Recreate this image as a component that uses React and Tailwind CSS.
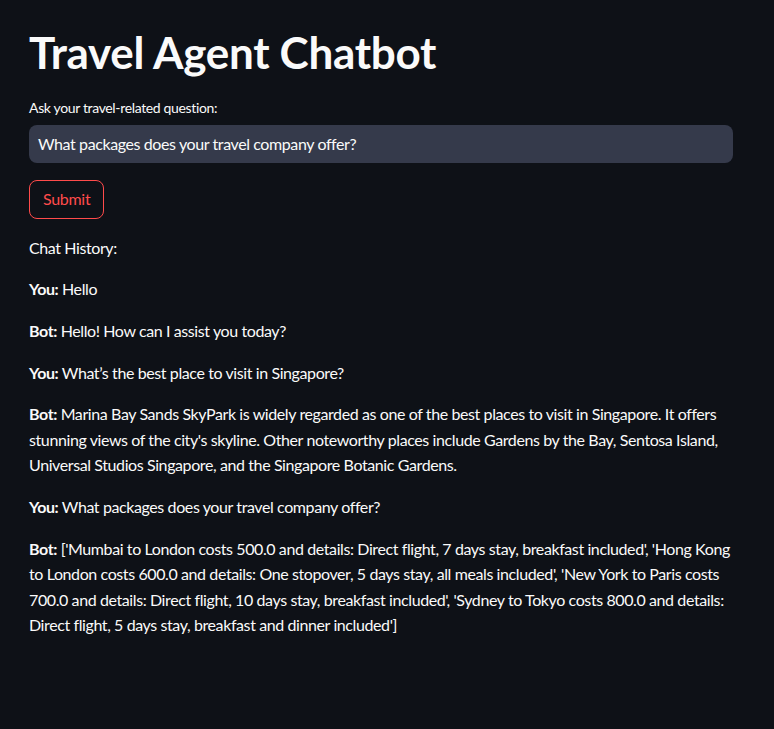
import React from 'react';

const history = [
  { who: 'You', text: 'Hello' },
  { who: 'Bot', text: 'Hello! How can I assist you today?' },
  { who: 'You', text: 'What\u2019s the best place to visit in Singapore?' },
  {
    who: 'Bot',
    text: "Marina Bay Sands SkyPark is widely regarded as one of the best places to visit in Singapore. It offers stunning views of the city's skyline. Other noteworthy places include Gardens by the Bay, Sentosa Island, Universal Studios Singapore, and the Singapore Botanic Gardens.",
  },
  { who: 'You', text: 'What packages does your travel company offer?' },
  {
    who: 'Bot',
    text: "['Mumbai to London costs 500.0 and details: Direct flight, 7 days stay, breakfast included', 'Hong Kong to London costs 600.0 and details: One stopover, 5 days stay, all meals included', 'New York to Paris costs 700.0 and details: Direct flight, 10 days stay, breakfast included', 'Sydney to Tokyo costs 800.0 and details: Direct flight, 5 days stay, breakfast and dinner included']",
  },
];

export default function App() {
  return (
    <div className="min-h-[729px] w-full bg-[#0e1117] text-[#fafafa] font-['Lato',sans-serif]">
      <div className="px-[29px] pt-[26px] pb-10 w-[762px]">
        <h1 className="text-[44px] leading-[1.2] font-bold tracking-[-0.3px]">Travel Agent Chatbot</h1>

        <label className="block mt-[19px] text-[14px] leading-[20px] tracking-[-0.35px]">
          Ask your travel-related question:
        </label>
        <div className="mt-[7px] h-[38px] rounded-lg bg-[#353a4b] flex items-center px-[9px] text-[16px] tracking-[-0.4px]">
          What packages does your travel company offer?
        </div>

        <button className="mt-[17px] h-[39px] px-[13px] rounded-lg border border-[#ff4b4b] text-[#ff4b4b] text-[16px] bg-transparent tracking-[-0.3px]">
          Submit
        </button>

        <div className="mt-4 text-[16px] leading-[25.6px] tracking-[-0.4px]">
          <p className="mb-4">Chat History:</p>
          {history.map((m, i) => (
            <p key={i} className="mb-4">
              <b className="font-bold">{m.who}:</b> {m.text}
            </p>
          ))}
        </div>
      </div>
    </div>
  );
}
